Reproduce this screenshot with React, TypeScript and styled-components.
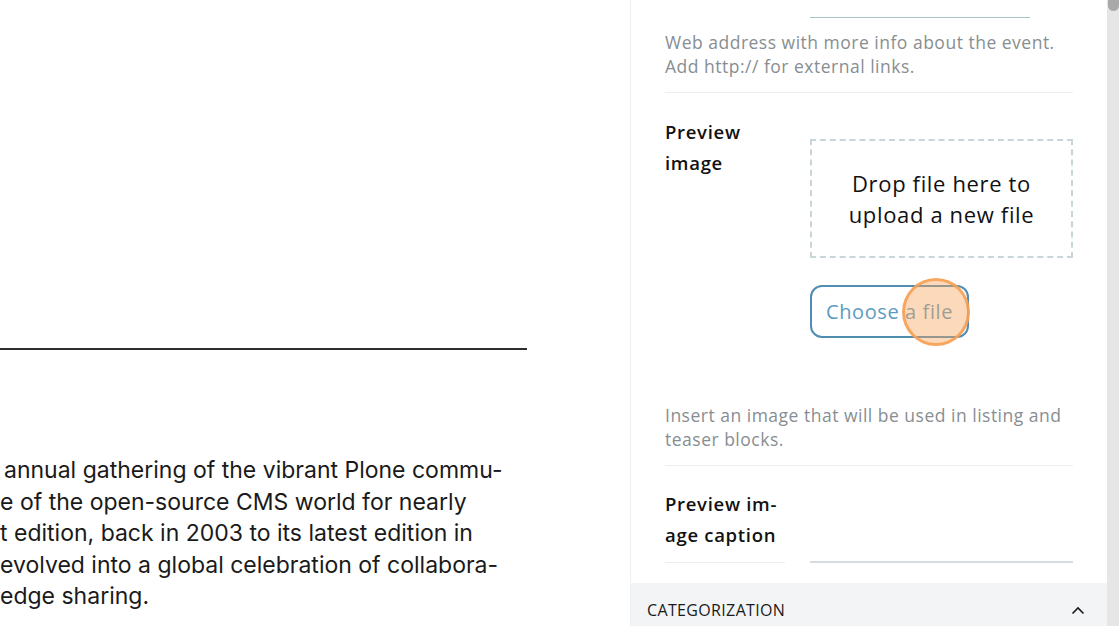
import React from "react";
import styled, { createGlobalStyle } from "styled-components";

const Global = createGlobalStyle`
  html, body { margin: 0; padding: 0; background: #fff; }
  body { font-family: "Open Sans", "Lato", sans-serif; }
  * { box-sizing: border-box; }
`;

const Page = styled.div`
  display: flex;
  width: 1120px;
  height: 626px;
  overflow: hidden;
  background: #fff;
`;

const Canvas = styled.div`
  width: 630px;
  flex: none;
  overflow: hidden;
  font-family: "Inter", "Liberation Sans", sans-serif;
  color: #1a1a1a;
`;

const Rule = styled.div`
  margin-top: 348px;
  width: 527px;
  height: 2px;
  background: #2e2e2e;
`;

const Paragraph = styled.div`
  margin-top: 105px;
  font-size: 23px;
  line-height: 31.5px;
  white-space: nowrap;
`;

const Line = styled.span<{ $shift: number }>`
  display: block;
  margin-left: ${(p) => p.$shift}px;
`;

const Sidebar = styled.aside`
  width: 477px;
  flex: none;
  border-left: 1px solid #eef0f1;
  display: flex;
  flex-direction: column;
  font-family: "Open Sans", "Lato", sans-serif;
`;

const Form = styled.div`
  flex: none;
  padding: 0 34px;
`;

const Row = styled.div<{ $pt?: number }>`
  display: grid;
  grid-template-columns: 120px 263px;
  column-gap: 25px;
  padding-top: ${(p) => p.$pt ?? 0}px;
`;

const Label = styled.div<{ $ruled?: boolean }>`
  font-size: 18.5px;
  font-weight: 600;
  line-height: 31px;
  letter-spacing: 0.7px;
  color: #111;
  hyphens: auto;
  padding-bottom: ${(p) => (p.$ruled ? "12px" : "0")};
  border-bottom: ${(p) => (p.$ruled ? "1px solid #eceeef" : "none")};
`;

const Widget = styled.div`
  display: flex;
  flex-direction: column;
  align-items: flex-start;
`;

const Input = styled.div<{ $h: number }>`
  width: 220px;
  height: ${(p) => p.$h}px;
  border-bottom: 1px solid #a9c4cf;
`;

const CaptionInput = styled.div`
  width: 100%;
  flex: 1;
  border-bottom: 2px solid #d3dde0;
`;

const Help = styled.p<{ $mt: number }>`
  margin: ${(p) => p.$mt}px 0 0;
  font-size: 17.5px;
  line-height: 24px;
  letter-spacing: 0.5px;
  color: #878e92;
`;

const Divider = styled.hr<{ $mt: number }>`
  margin: ${(p) => p.$mt}px 0 0;
  border: none;
  border-top: 1px solid #eceeef;
  height: 0;
`;

const Dropzone = styled.div`
  margin-top: 23px;
  width: 263px;
  height: 119px;
  border: 2px dashed #c8d5d9;
  display: flex;
  align-items: center;
  justify-content: center;
  text-align: center;
  font-size: 22px;
  line-height: 31px;
  letter-spacing: 0.65px;
  color: #111;
`;

const ButtonWrap = styled.div`
  position: relative;
  margin-top: 27px;
`;

const FileButton = styled.button`
  height: 53px;
  width: 159px;
  border: 2px solid #4f8db3;
  border-radius: 12px;
  background: #fff;
  color: #5c9bc0;
  font-family: inherit;
  font-size: 20px;
  letter-spacing: 0.6px;
  padding: 0 14px;
  text-align: left;
  white-space: nowrap;
`;

const ClickMark = styled.span`
  position: absolute;
  left: 92px;
  top: -7px;
  width: 68px;
  height: 68px;
  border-radius: 50%;
  background: rgba(248, 165, 90, 0.42);
  border: 3px solid rgba(246, 160, 85, 0.9);
  pointer-events: none;
`;

const SectionHeader = styled.div`
  flex: none;
  margin-top: 20px;
  height: 54px;
  background: #f3f4f5;
  display: flex;
  align-items: center;
  justify-content: space-between;
  padding: 0 22px 0 16px;
  font-size: 16px;
  font-weight: 500;
  letter-spacing: 0.35px;
  color: #1a1a1a;
  text-transform: uppercase;
`;

const ScrollTrack = styled.div`
  width: 12px;
  flex: none;
  background: #e6e6e6;
`;

const Thumb = styled.div`
  margin-left: 1px;
  width: 11px;
  height: 11px;
  background: #a9a9a9;
  border-radius: 0 0 6px 6px;
`;

export default function App() {
  return (
    <>
      <Global />
      <Page>
        <Canvas>
          <Rule />
          <Paragraph>
            <Line $shift={4}>annual gathering of the vibrant Plone commu-</Line>
            <Line $shift={0}>e of the open-source CMS world for nearly</Line>
            <Line $shift={0}>t edition, back in 2003 to its latest edition in</Line>
            <Line $shift={0}>evolved into a global celebration of collabora-</Line>
            <Line $shift={0}>edge sharing.</Line>
          </Paragraph>
        </Canvas>
        <Sidebar>
          <Form>
            <Row>
              <div />
              <Widget>
                <Input $h={18} />
              </Widget>
            </Row>
            <Help $mt={12}>
              Web address with more info about the event.
              <br />
              Add http:// for external links.
            </Help>
            <Divider $mt={14} />
            <Row $pt={23}>
              <Label lang="en">Preview image</Label>
              <Widget>
                <Dropzone>
                  Drop file here to
                  <br />
                  upload a new file
                </Dropzone>
                <ButtonWrap>
                  <FileButton>Choose a file</FileButton>
                  <ClickMark />
                </ButtonWrap>
              </Widget>
            </Row>
            <Help $mt={65}>
              Insert an image that will be used in listing and
              <br />
              teaser blocks.
            </Help>
            <Divider $mt={14} />
            <Row $pt={22}>
              <Label lang="en" $ruled>
                Preview im&shy;age caption
              </Label>
              <Widget>
                <CaptionInput />
              </Widget>
            </Row>
          </Form>
          <SectionHeader>
            Categorization
            <svg width="14" height="9" viewBox="0 0 14 9" fill="none">
              <polyline points="1.5,7.5 7,2 12.5,7.5" stroke="#1a1a1a" strokeWidth="1.6" />
            </svg>
          </SectionHeader>
        </Sidebar>
        <ScrollTrack>
          <Thumb />
        </ScrollTrack>
      </Page>
    </>
  );
}
